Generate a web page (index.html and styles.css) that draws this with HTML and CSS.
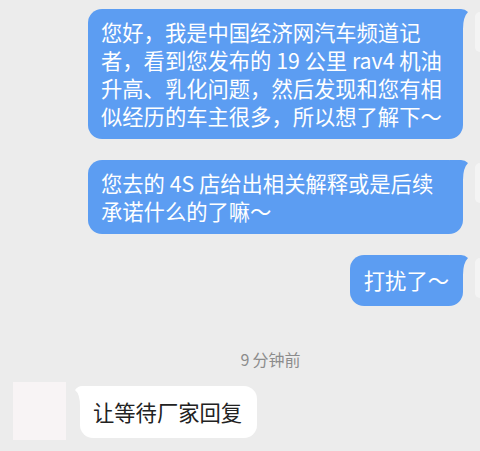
FILE: index.html
```html
<!DOCTYPE html>
<html lang="zh-CN">
<head>
<meta charset="utf-8">
<title>聊天</title>
<link rel="stylesheet" href="styles.css">
</head>
<body>
<div class="chat">
  <div class="row row-out">
    <div class="bubble bubble-out">您好，我是中国经济网汽车频道记者，看到您发布的 19 公里 rav4 机油升高、乳化问题，然后发现和您有相似经历的车主很多，所以想了解下～</div>
    <div class="avatar-out"></div>
  </div>
  <div class="row row-out">
    <div class="bubble bubble-out">您去的 4S 店给出相关解释或是后续承诺什么的了嘛～</div>
    <div class="avatar-out"></div>
  </div>
  <div class="row row-out row-last">
    <div class="bubble bubble-out bubble-single">打扰了～</div>
    <div class="avatar-out"></div>
  </div>
  <div class="time"><span class="time-num">9</span>分钟前</div>
  <div class="row row-in">
    <div class="avatar-in"></div>
    <div class="bubble bubble-in">让等待厂家回复</div>
  </div>
</div>
</body>
</html>
```
FILE: styles.css
```css
html, body {
  margin: 0;
  padding: 0;
  background: #ececec;
  overflow: hidden;
}
body {
  width: 480px;
  height: 451px;
  font-family: "Noto Sans CJK SC", "Noto Sans", sans-serif;
}
.chat {
  display: flex;
  flex-direction: column;
  padding-top: 9px;
}
.row {
  display: flex;
  align-items: flex-start;
}
.row-out {
  justify-content: flex-end;
  gap: 12px;
  margin-bottom: 21px;
}
.row-last {
  margin-bottom: 0;
}
.bubble {
  position: relative;
  font-size: 21.3px;
  line-height: 28px;
  border-radius: 14px;
  box-sizing: border-box;
}
.bubble-out {
  width: 375px;
  background: #5c9df2;
  color: #ffffff;
  padding: 9px 17px 9px 13px;
}
.bubble-out::after {
  content: "";
  position: absolute;
  top: 0;
  right: -5px;
  width: 18px;
  height: 20px;
  background: #5c9df2;
  clip-path: path("M0 0 H11 Q15 0 18 3 Q13 8 13 20 H0 Z");
}
.bubble-single {
  width: auto;
  padding: 11px 14px 12px 14px;
}
.avatar-out {
  flex: none;
  width: 5px;
  height: 40px;
  margin-top: 3px;
  border-radius: 20px 0 0 20px;
  background: #f4f4f4;
}
.time {
  margin-top: 43px;
  text-align: center;
  font-size: 16px;
  line-height: 20px;
  color: #8c8c8c;
  padding-left: 61px;
}
.time-num {
  margin-right: 3px;
}
.row-in {
  margin-top: 13px;
  padding-left: 13px;
  gap: 14px;
}
.avatar-in {
  flex: none;
  width: 53px;
  height: 58px;
  background: #f8f4f5;
}
.bubble-in {
  margin-top: 4px;
  background: #ffffff;
  color: #222222;
  padding: 12px 15px 12px 13px;
  border-radius: 13px;
}
.bubble-in::before {
  content: "";
  position: absolute;
  top: 0;
  left: -5px;
  width: 18px;
  height: 20px;
  background: #ffffff;
  clip-path: path("M18 0 H7 Q3 0 0 4 Q5 8 5 20 H18 Z");
}
```
